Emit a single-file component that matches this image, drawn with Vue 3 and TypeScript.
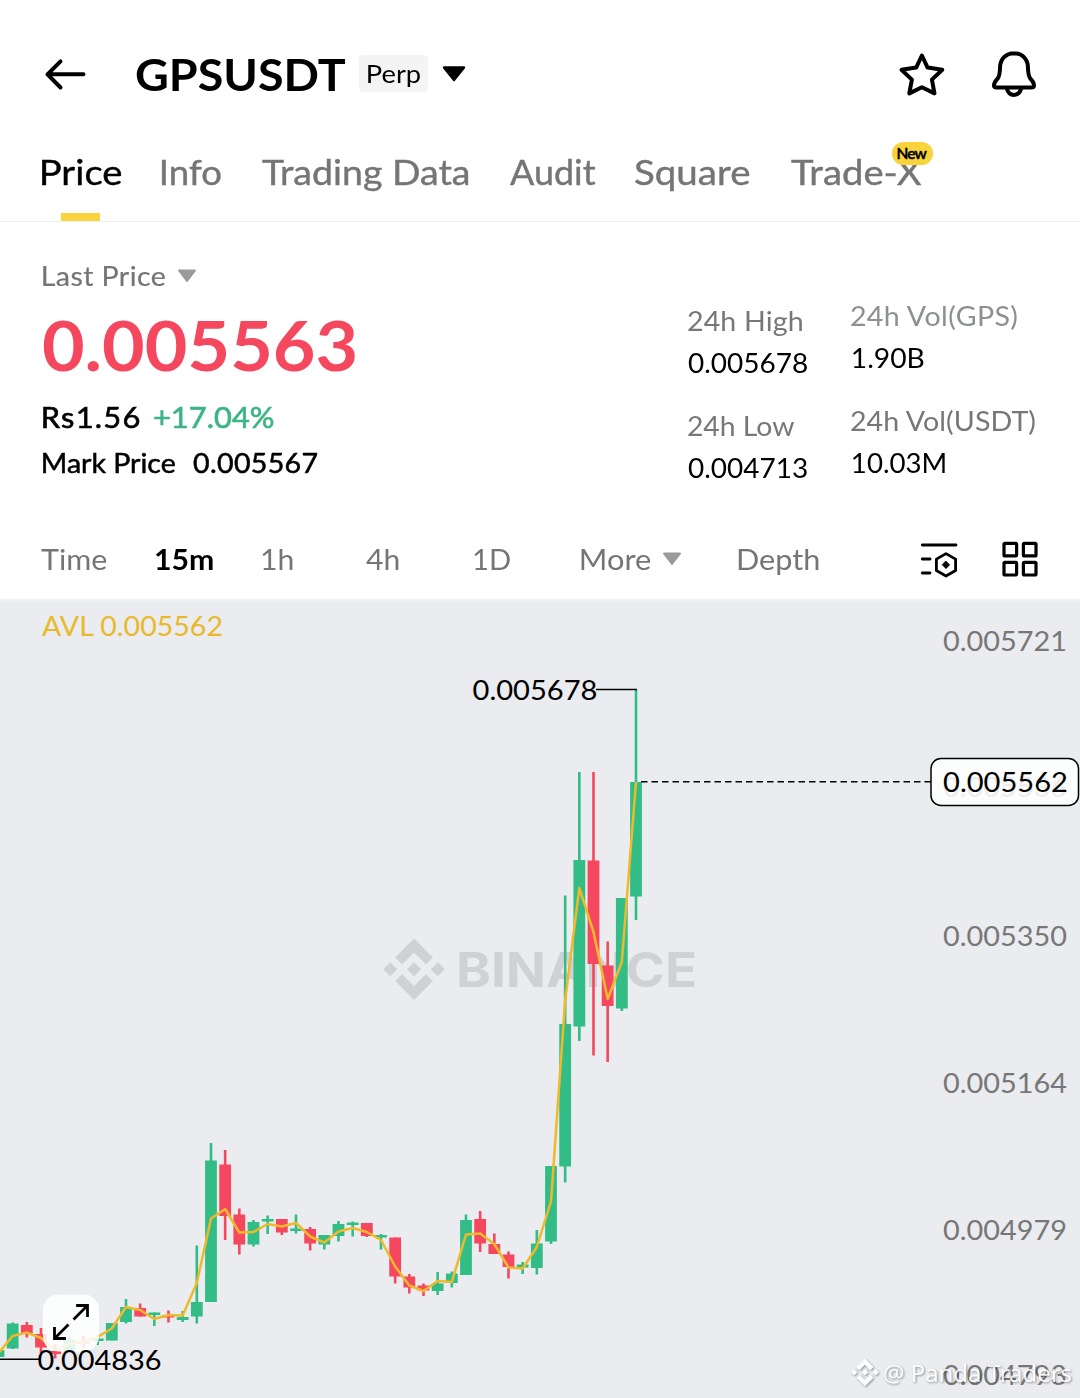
<script setup lang="ts">
import type { Directive } from 'vue'

// Widens a label so that its glyphs span exactly the given number of pixels:
// the letters take most of the stretch, the gaps between them the rest.
const vSpan: Directive<HTMLElement, number> = {
  mounted(el, { value }) {
    const ctx = document.createElement('canvas').getContext('2d')
    if (!ctx) return
    const style = getComputedStyle(el)
    const text = (el.textContent ?? '').trim()
    ctx.font = `${style.fontWeight} ${style.fontSize} ${style.fontFamily}`
    const m = ctx.measureText(text)
    const ink = m.actualBoundingBoxLeft + m.actualBoundingBoxRight
    const scale = Math.min(1.1, Math.max(1, value / ink))
    el.style.width = `${value}px`
    el.style.transform = `scaleX(${scale})`
    el.style.letterSpacing = `${(value / scale - ink) / (text.length - 1)}px`
    el.style.textIndent = `${m.actualBoundingBoxLeft}px`
  },
}

interface Tab { label: string; span: number; gap: number; active?: boolean; badge?: string }
const tabs: Tab[] = [
  { label: 'Price', span: 80, gap: 0, active: true },
  { label: 'Info', span: 59, gap: 40 },
  { label: 'Trading Data', span: 207, gap: 41 },
  { label: 'Audit', span: 86, gap: 41 },
  { label: 'Square', span: 115, gap: 39 },
  { label: 'Trade-X', span: 131, gap: 41, badge: 'New' },
]

interface Stat { label: string; value: string; labelSpan: number; valueSpan: number; soft?: boolean }
const priceStats: Stat[] = [
  { label: '24h High', value: '0.005678', labelSpan: 114, valueSpan: 119 },
  { label: '24h Low', value: '0.004713', labelSpan: 106, valueSpan: 119 },
]
const volumeStats: Stat[] = [
  { label: '24h Vol(GPS)', value: '1.90B', labelSpan: 167, valueSpan: 71, soft: true },
  { label: '24h Vol(USDT)', value: '10.03M', labelSpan: 185, valueSpan: 92 },
]

interface Interval { label: string; span: number; gap: number; active?: boolean; menu?: boolean }
const intervals: Interval[] = [
  { label: 'Time', span: 66, gap: 0 },
  { label: '15m', span: 58, gap: 48, active: true },
  { label: '1h', span: 31, gap: 49 },
  { label: '4h', span: 33, gap: 73 },
  { label: '1D', span: 36, gap: 75 },
  { label: 'More', span: 70, gap: 71, menu: true },
  { label: 'Depth', span: 81, gap: 56 },
]

// high, low, body top, body bottom, average, direction
type Candle = [number, number, number, number, number, 'up' | 'down']
const candles: Candle[] = [
  [1350, 1357, 1350, 1357, 1353, 'up'],
  [1322.5, 1349, 1323.5, 1348.5, 1336, 'up'],
  [1322, 1337.5, 1325, 1333, 1332.5, 'down'],
  [1328, 1353, 1334, 1347.5, 1338, 'down'],
  [1344, 1358.5, 1351, 1354, 1350, 'down'],
  [1337, 1351, 1340, 1351, 1344, 'up'],
  [1336, 1348, 1341, 1343.5, 1342, 'down'],
  [1335, 1345, 1338.5, 1341, 1337, 'up'],
  [1323, 1340.5, 1323, 1340.5, 1328.5, 'up'],
  [1299, 1323.5, 1307, 1322, 1307, 'up'],
  [1303.5, 1316.5, 1308, 1316.5, 1310, 'down'],
  [1312.5, 1326, 1312.5, 1315, 1319, 'up'],
  [1310.5, 1322.5, 1315, 1317.5, 1315, 'down'],
  [1311, 1322, 1317, 1320, 1315.5, 'up'],
  [1245.5, 1323.5, 1302, 1316.5, 1283, 'up'],
  [1143, 1302, 1160.5, 1302, 1218.5, 'up'],
  [1150, 1240, 1164.5, 1216, 1209, 'down'],
  [1208.5, 1254.5, 1214.5, 1244.5, 1232.5, 'down'],
  [1220, 1246.5, 1222, 1244.5, 1232, 'up'],
  [1215.5, 1234, 1219, 1221.5, 1224, 'up'],
  [1219, 1235, 1219, 1232.5, 1226.5, 'down'],
  [1214.5, 1233.5, 1228.5, 1231, 1223, 'up'],
  [1227, 1250.5, 1229, 1243.5, 1236.5, 'down'],
  [1235, 1249.5, 1235, 1244.5, 1242.5, 'up'],
  [1221, 1241.5, 1224, 1236, 1231.5, 'up'],
  [1221.5, 1236.5, 1222.5, 1225, 1228, 'up'],
  [1223, 1237, 1223, 1236, 1232, 'down'],
  [1234, 1249.5, 1235, 1237.5, 1240, 'up'],
  [1237.5, 1283.5, 1237.5, 1276.5, 1266.5, 'down'],
  [1274, 1293.5, 1276.5, 1287.5, 1285.5, 'down'],
  [1283.5, 1296, 1285.5, 1290.5, 1291, 'down'],
  [1272, 1295, 1283.5, 1291, 1281, 'up'],
  [1271.5, 1287.5, 1273.5, 1283, 1282, 'up'],
  [1214.5, 1275, 1220, 1275, 1234.5, 'up'],
  [1211, 1252, 1219, 1243.5, 1233.5, 'down'],
  [1233.5, 1254, 1244, 1254, 1244, 'down'],
  [1251.5, 1278.5, 1254.5, 1267, 1267.5, 'down'],
  [1262, 1274, 1264.5, 1267.5, 1268.5, 'up'],
  [1230, 1274.5, 1243.5, 1268, 1247, 'up'],
  [1166, 1244, 1166, 1241.5, 1201.5, 'up'],
  [895.5, 1182.5, 1024, 1166.5, 1000, 'up'],
  [772, 1041, 860, 1026.5, 888, 'up'],
  [772, 1055.5, 860.5, 964, 932, 'down'],
  [941.5, 1062, 965.5, 1006, 999, 'down'],
  [898, 1011, 898, 1008.5, 962, 'up'],
  [690, 920, 782, 896.5, 782, 'up'],
]
const STEP = 14.167
const xAt = (i: number): number => 636 - (candles.length - 1 - i) * STEP
const average: string = candles.map((c, i) => `${xAt(i).toFixed(1)},${c[4]}`).join(' ')

const axis: { text: string; y: number }[] = [
  { text: '0.005721', y: 651 },
  { text: '0.005536', y: 797 },
  { text: '0.005350', y: 946 },
  { text: '0.005164', y: 1093 },
  { text: '0.004979', y: 1240 },
  { text: '0.004793', y: 1385 },
]

const brandMark =
  'M38.73 53.2l24.59-24.58 24.6 24.6 14.3-14.31L63.32 0l-38.9 38.9zM0 63.31L14.3 49l14.31 14.31-14.31 14.3zM38.73 73.41L63.32 98l24.6-24.6 14.31 14.29-38.91 38.91-38.9-38.88zM98 63.31L112.3 49l14.31 14.3-14.31 14.32zM77.83 63.3L63.32 48.78 48.81 63.28l14.51 14.5z'
</script>

<template>
  <div class="screen">
    <header class="top">
      <svg class="back" width="44" height="36" viewBox="43 56 44 36">
        <path d="M83.500 74.300H48M60.500 61.300L47.500 74.300L60.500 87.500" />
      </svg>
      <h1 v-span="210">GPSUSDT</h1>
      <span class="perp"><span v-span="52">Perp</span></span>
      <svg class="caret" width="24" height="16" viewBox="0 0 24 16">
        <path d="M2 1.500H22L12 14Z" />
      </svg>
      <span class="grow"></span>
      <svg class="line-icon star" width="48" height="48" viewBox="898 50 48 48">
        <path d="M921.900 55.500L927.600 67.600L942.300 69.800L931.900 79.600L934.500 93.400L921.900 87.200L909.300 93.400L911.900 79.600L901.500 69.800L916.200 67.600Z" />
      </svg>
      <svg class="line-icon bell" width="48" height="50" viewBox="990 49 48 50">
        <path d="M1014 53.200C1005.800 53.200 1000.300 59.300 1000.100 67C999.900 73 999.800 76 997.600 78.700C995.200 81.300 994 82.500 994 85.500Q994 87.500 996.500 87.500H1031.500Q1034 87.500 1034 85.500C1034 82.500 1032.800 81.300 1030.400 78.700C1028.200 76 1028.100 73 1027.900 67C1027.700 59.300 1022.200 53.200 1014 53.200Z" />
        <path d="M1006.800 88.500C1008 93 1010.500 94.900 1014 94.900S1020 93 1021.200 88.500" />
      </svg>
    </header>

    <nav class="tabs">
      <div
        v-for="tab in tabs"
        :key="tab.label"
        class="tab"
        :class="{ active: tab.active }"
        :style="{ marginLeft: `${tab.gap}px` }"
      >
        <span v-span="tab.span">{{ tab.label }}</span>
        <span v-if="tab.badge" class="new"><span v-span="30">{{ tab.badge }}</span></span>
      </div>
    </nav>

    <section class="summary">
      <div class="quote">
        <div class="row last">
          <span v-span="122">Last Price</span>
          <svg width="20" height="14" viewBox="0 0 20 14"><path d="M2 1.500H18L10 12Z" /></svg>
        </div>
        <div class="row price"><span v-span="312">0.005563</span></div>
        <div class="row fiat">
          <span v-span="97">Rs1.56</span>
          <span v-span="120" class="gain">+17.04%</span>
        </div>
        <div class="row mark">
          <span v-span="132">Mark Price</span>
          <span v-span="125">0.005567</span>
        </div>
      </div>
      <div class="stats first">
        <div v-for="s in priceStats" :key="s.label" class="stat">
          <span v-span="s.labelSpan" class="name">{{ s.label }}</span>
          <span v-span="s.valueSpan">{{ s.value }}</span>
        </div>
      </div>
      <div class="stats second">
        <div v-for="s in volumeStats" :key="s.label" class="stat">
          <span v-span="s.labelSpan" class="name" :class="{ soft: s.soft }">{{ s.label }}</span>
          <span v-span="s.valueSpan" class="amount">{{ s.value }}</span>
        </div>
      </div>
    </section>

    <div class="intervals">
      <div
        v-for="it in intervals"
        :key="it.label"
        class="interval"
        :class="{ active: it.active }"
        :style="{ marginLeft: `${it.gap}px` }"
      >
        <span v-span="it.span">{{ it.label }}</span>
        <svg v-if="it.menu" width="20" height="14" viewBox="0 0 20 14"><path d="M2 1.500H18L10 12Z" /></svg>
      </div>
      <span class="grow"></span>
      <svg class="tool" width="40" height="40" viewBox="919 539 40 40">
        <path d="M922.300 545H956M922.300 559H930M922.300 573H930" />
        <path d="M946 553.600L955.600 559.100V570.500L946 576L936.400 570.500V559.100Z" />
        <path class="dot" d="M946 561.300L949.500 564.900L946 568.500L942.500 564.900Z" />
      </svg>
      <svg class="tool grid" width="40" height="40" viewBox="1000 539 40 40">
        <rect x="1004" y="543.300" width="12.600" height="12.600" rx="1" />
        <rect x="1023.400" y="543.300" width="12.600" height="12.600" rx="1" />
        <rect x="1004" y="562.400" width="12.600" height="12.600" rx="1" />
        <rect x="1023.400" y="562.400" width="12.600" height="12.600" rx="1" />
      </svg>
    </div>

    <svg class="chart" width="1080" height="799" viewBox="0 599 1080 799">
      <rect class="edge" x="0" y="599" width="1080" height="3" />
      <g class="brand">
        <path :d="brandMark" transform="translate(383.300 938.500) scale(.4857)" />
        <text x="456" y="987" textLength="241" lengthAdjust="spacingAndGlyphs">BINANCE</text>
      </g>
      <text class="avl" x="42" y="635.500" textLength="181" lengthAdjust="spacingAndGlyphs">AVL 0.005562</text>
      <text
        v-for="a in axis"
        :key="a.text"
        class="axis"
        x="943"
        :y="a.y"
        textLength="124"
        lengthAdjust="spacingAndGlyphs"
      >{{ a.text }}</text>

      <g v-for="(c, i) in candles" :key="i" :class="c[5]">
        <rect :x="xAt(i) - 1.300" :y="c[0]" width="2.600" :height="c[1] - c[0]" />
        <rect :x="xAt(i) - 5.900" :y="c[2]" width="11.800" :height="c[3] - c[2]" />
      </g>
      <polyline class="average" :points="average" />

      <path class="rule" d="M596 689.500H637" />
      <text class="note" x="472.500" y="700" textLength="125" lengthAdjust="spacingAndGlyphs">0.005678</text>

      <path class="last-line" d="M641 781.700H931" />
      <rect class="tag" x="931" y="758.500" width="147.500" height="47" rx="10" />
      <text class="note" x="943" y="792" textLength="125" lengthAdjust="spacingAndGlyphs">0.005562</text>

      <rect class="expand" x="43" y="1294.500" width="56" height="57" rx="15" />
      <path class="arrows" d="M74.500 1318.500L87 1306M77.500 1305.500H87.500V1315.500M67.500 1325.500L55 1338M54.500 1328.500V1338.500H64.500" />
      <path class="rule" d="M0 1359.300H39" />
      <text class="note" x="37.500" y="1370" textLength="124" lengthAdjust="spacingAndGlyphs">0.004836</text>

      <g class="author">
        <path :d="brandMark" transform="translate(851 1358.500) scale(.22)" />
        <text x="883" y="1382" textLength="189">@ Panda Traders</text>
      </g>
    </svg>
  </div>
</template>

<style>
body {
  margin: 0;
  background: #fff;
}
</style>

<style scoped>
.screen {
  width: 1080px;
  height: 1398px;
  overflow: hidden;
  background: #fff;
  color: #000;
  font-family: Lato, "Liberation Sans", sans-serif;
  white-space: nowrap;
}
svg {
  display: block;
  flex: none;
}
span,
h1 {
  flex: none;
  display: block;
  transform-origin: 0 50%;
}
.grow {
  flex: 1;
}
.top {
  display: flex;
  align-items: center;
  box-sizing: border-box;
  height: 130px;
  padding: 17px 42px 0 43px;
}
.back {
  margin-right: 49px;
}
.back path,
.line-icon path {
  fill: none;
  stroke: #000;
  stroke-width: 4;
  stroke-linecap: round;
  stroke-linejoin: round;
}
h1 {
  margin: 0;
  padding-top: 2px;
  font-size: 43px;
  font-weight: 700;
  line-height: 60px;
}
.perp {
  display: flex;
  justify-content: center;
  width: 69px;
  margin-left: 13px;
  border-radius: 4px;
  background: #f4f4f4;
  font-size: 25px;
  line-height: 37px;
}
.caret {
  margin-left: 14px;
}
.caret path {
  stroke: #000;
  stroke-width: 2.500;
  stroke-linejoin: round;
}
.star {
  margin-right: 44px;
}
.tabs {
  display: flex;
  box-sizing: border-box;
  height: 92px;
  padding-left: 42px;
  border-bottom: 1px solid #eeeeee;
  color: #757575;
  font-size: 35px;
  line-height: 82px;
  -webkit-text-stroke: .4px;
}
.tab {
  position: relative;
}
.tab.active {
  color: #000;
}
.tab.active::after {
  content: "";
  position: absolute;
  left: 19px;
  bottom: 0;
  width: 39px;
  height: 8px;
  background: #f8d33a;
}
.new {
  position: absolute;
  left: 101px;
  top: 12px;
  display: flex;
  justify-content: center;
  width: 41px;
  border-radius: 12px;
  background: #f8d33a;
  color: #000;
  font-size: 15.500px;
  font-weight: 600;
  line-height: 23px;
}
.summary {
  display: flex;
  box-sizing: border-box;
  height: 297px;
  padding: 34px 0 0 43px;
}
.quote {
  width: 645px;
}
.row {
  display: flex;
  align-items: center;
}
.last {
  gap: 12px;
  color: #757575;
  font-size: 26px;
  line-height: 41px;
  -webkit-text-stroke: .2px;
}
.last svg {
  margin-top: -2px;
}
.last svg,
.interval svg {
  fill: #9a9b9d;
  stroke: #9a9b9d;
  stroke-width: 2;
  stroke-linejoin: round;
}
.price {
  color: #f5475d;
  font-size: 69px;
  font-weight: 700;
  line-height: 95px;
}
.fiat {
  gap: 14px;
  font-size: 28px;
  line-height: 51px;
  -webkit-text-stroke: .6px;
}
.gain {
  color: #3cb586;
}
.mark {
  gap: 18px;
  font-size: 26px;
  line-height: 41px;
  -webkit-text-stroke: .5px;
}
.stats {
  display: flex;
  flex-direction: column;
  font-size: 26px;
}
.first {
  width: 163px;
  padding-top: 44px;
  gap: 21px;
  line-height: 42px;
}
.second {
  padding-top: 40px;
  gap: 22px;
  line-height: 41.500px;
}
.name {
  color: #777;
}
.soft {
  color: #8c9092;
}
.amount {
  margin-left: 2px;
}
.intervals {
  display: flex;
  align-items: center;
  height: 80px;
  padding: 0 40px 0 41px;
  color: #757575;
  font-size: 29px;
}
.interval {
  display: flex;
  align-items: center;
  gap: 11px;
}
.interval > span {
  padding-bottom: 2px;
}
.interval.active {
  color: #000;
  font-weight: 700;
}
.tool {
  fill: none;
  stroke: #000;
  stroke-width: 2.800;
  stroke-linecap: round;
  stroke-linejoin: round;
}
.tool.grid {
  margin-left: 41px;
  stroke-width: 3.200;
}
.dot {
  fill: #000;
  stroke-width: 1;
}
.chart {
  background: #eaecef;
  font-size: 26px;
}
.edge {
  fill: #f1f2f4;
}
.brand {
  fill: #d0d1d4;
  font-family: Inter, sans-serif;
  font-size: 48px;
  font-weight: 700;
}
.avl {
  fill: #e9b92a;
  font-size: 27px;
}
.axis {
  fill: #777;
}
.up {
  fill: #31bd85;
}
.down {
  fill: #f5475d;
}
.average {
  fill: none;
  stroke: #f0b92b;
  stroke-width: 2.500;
  stroke-linejoin: round;
}
.rule {
  stroke: #000;
  stroke-width: 1.400;
}
.last-line {
  stroke: #000;
  stroke-width: 1.500;
  stroke-dasharray: 6.500 4;
}
.tag {
  fill: #fff;
  fill-opacity: .86;
  stroke: #000;
  stroke-width: 1.500;
}
.expand {
  fill: #fff;
  fill-opacity: .86;
}
.arrows {
  fill: none;
  stroke: #000;
  stroke-width: 2.800;
  stroke-linecap: square;
}
.author {
  fill: #fff;
  font-family: "Noto Sans", sans-serif;
  font-size: 24px;
  filter: drop-shadow(1px 1px 1px rgba(0, 0, 0, .45));
  opacity: .85;
}
</style>
